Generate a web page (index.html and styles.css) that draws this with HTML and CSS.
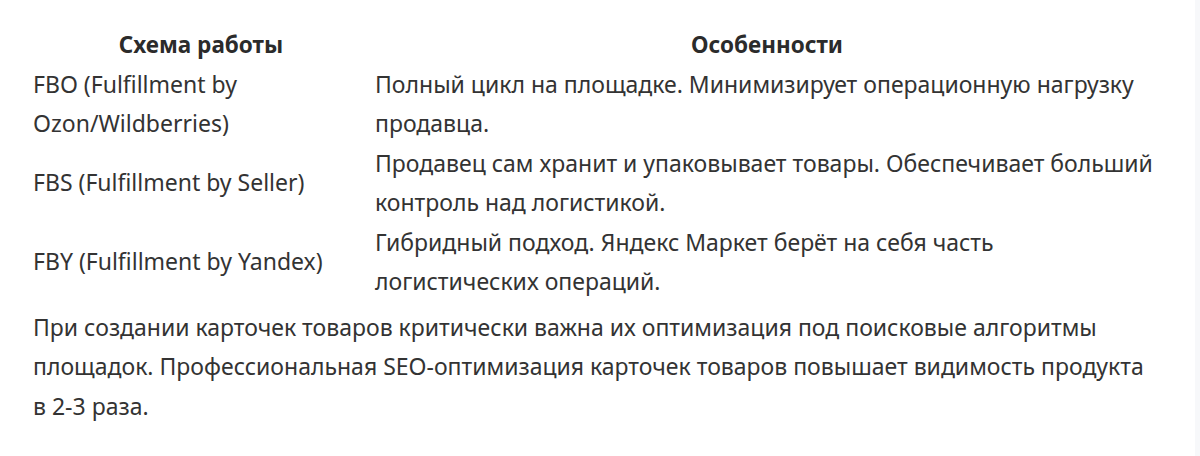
FILE: index.html
```html
<!DOCTYPE html>
<html lang="ru">
<head>
<meta charset="utf-8">
<title>Схемы работы</title>
<link rel="stylesheet" href="styles.css">
</head>
<body>
<div class="page">
  <div class="content">
    <table class="schemes">
      <thead>
        <tr>
          <th class="col-scheme">Схема работы</th>
          <th class="col-feature">Особенности</th>
        </tr>
      </thead>
      <tbody>
        <tr>
          <td>FBO (Fulfillment by<br>Ozon/Wildberries)</td>
          <td>Полный цикл на площадке. Минимизирует операционную нагрузку<br>продавца.</td>
        </tr>
        <tr>
          <td>FBS (Fulfillment by Seller)</td>
          <td>Продавец сам хранит и упаковывает товары. Обеспечивает больший<br>контроль над логистикой.</td>
        </tr>
        <tr>
          <td>FBY (Fulfillment by Yandex)</td>
          <td>Гибридный подход. Яндекс Маркет берёт на себя часть<br>логистических операций.</td>
        </tr>
      </tbody>
    </table>
    <p class="note">При создании карточек товаров критически важна их оптимизация под поисковые алгоритмы<br>площадок. Профессиональная SEO-оптимизация карточек товаров повышает видимость продукта<br>в 2-3 раза.</p>
  </div>
  <div class="scroll-track"></div>
</div>
</body>
</html>
```
FILE: styles.css
```css
html, body {
  margin: 0;
  padding: 0;
  background: #ffffff;
}

body {
  font-family: "Noto Sans", "Open Sans", sans-serif;
  color: #333333;
  font-size: 23px;
  line-height: 39.5px;
}

.page {
  display: flex;
  min-height: 456px;
}

.content {
  flex: 1;
  padding: 25px 0 0 27px;
}

.scroll-track {
  width: 5px;
  background: #f7f8fa;
}

.schemes {
  border-collapse: collapse;
  width: 1138px;
}

.schemes th,
.schemes td {
  padding: 0 6px;
  vertical-align: middle;
  text-align: left;
  font-weight: 400;
}

.schemes th {
  text-align: center;
  font-size: 22.5px;
  font-weight: 700;
  color: #2b2b2b;
}

.schemes th.col-scheme {
  width: 324px;
  padding-left: 12px;
}

.note {
  margin: 6px 0 0 6px;
}
```
